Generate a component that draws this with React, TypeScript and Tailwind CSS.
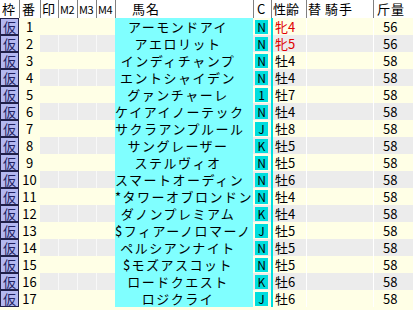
const horses = [
  { no: 1, name: "アーモンドアイ", c: "N", sex: "牝4", kg: 56 },
  { no: 2, name: "アエロリット", c: "N", sex: "牝5", kg: 56 },
  { no: 3, name: "インディチャンプ", c: "N", sex: "牡4", kg: 58 },
  { no: 4, name: "エントシャイデン", c: "N", sex: "牡4", kg: 58 },
  { no: 5, name: "グァンチャーレ", c: "1", sex: "牡7", kg: 58 },
  { no: 6, name: "ケイアイノーテック", c: "N", sex: "牡4", kg: 58 },
  { no: 7, name: "サクラアンプルール", c: "J", sex: "牡8", kg: 58 },
  { no: 8, name: "サングレーザー", c: "K", sex: "牡5", kg: 58 },
  { no: 9, name: "ステルヴィオ", c: "N", sex: "牡5", kg: 58 },
  { no: 10, name: "スマートオーディン", c: "N", sex: "牡6", kg: 58 },
  { no: 11, name: "*タワーオブロンドン", c: "N", sex: "牡4", kg: 58 },
  { no: 12, name: "ダノンプレミアム", c: "K", sex: "牡4", kg: 58 },
  { no: 13, name: "$フィアーノロマーノ", c: "J", sex: "牡5", kg: 58 },
  { no: 14, name: "ペルシアンナイト", c: "N", sex: "牡5", kg: 58 },
  { no: 15, name: "$モズアスコット", c: "N", sex: "牡5", kg: 58 },
  { no: 16, name: "ロードクエスト", c: "K", sex: "牡6", kg: 58 },
  { no: 17, name: "ロジクライ", c: "J", sex: "牡6", kg: 58 },
];

const cols = "grid grid-cols-[19px_21px_18px_19px_19px_19px_138px_18px_35px_67px_40px]";

function App() {
  return (
    <div
      className="w-[413px] h-[310px] overflow-hidden bg-[#ffffe6] text-[13px] text-black"
      style={{ fontFamily: '"MS UI Gothic", "Noto Sans CJK JP", sans-serif' }}
    >
      {/* header */}
      <div className={`${cols} h-[18px] bg-white leading-[18px]`}>
        <div className="pl-[2px]">枠</div>
        <div className="border-l border-[#808080] pl-[2px]">番</div>
        <div className="border-l border-[#808080] pl-[1px]">印</div>
        <div className="border-l border-[#808080] pl-[1px] text-[11px] tracking-[-0.5px]">M2</div>
        <div className="border-l border-[#808080] pl-[1px] text-[11px] tracking-[-0.5px]">M3</div>
        <div className="border-l border-[#808080] pl-[1px] text-[11px] tracking-[-0.5px]">M4</div>
        <div className="border-l border-[#808080] pl-[16px] tracking-[1px]">馬名</div>
        <div className="border-l border-[#808080] pl-[3px]">C</div>
        <div className="border-l border-[#808080] pl-[1px]">性齢</div>
        <div className="border-l border-[#808080] pl-[1px] flex gap-[4px]">
          <span>替</span>
          <span className="tracking-[1px]">騎手</span>
        </div>
        <div className="border-l border-[#808080] pl-[3px] tracking-[1px]">斤量</div>
      </div>

      {horses.map((h, i) => {
        const odd = i % 2 === 0;
        const bg = odd ? "bg-[#ffffe6]" : "bg-[#ececec]";
        const mark = odd ? "border-l border-[#ffffe6]" : "border-l border-[#f8f8f8]";
        return (
          <div key={h.no} className={`${cols} h-[17px] leading-[17px]`}>
            <div className="border border-[#20204a] bg-[#b4b8f0] text-[#202060] text-center leading-[15px]">仮</div>
            <div className="bg-[#ffffe6] text-center">{h.no}</div>
            <div className={bg}></div>
            <div className={`${bg} ${mark}`}></div>
            <div className={`${bg} ${mark}`}></div>
            <div className={`${bg} ${mark}`}></div>
            <div className="bg-[#80ffff] text-center pr-[12px] tracking-[1.5px] whitespace-nowrap">{h.name}</div>
            <div className={`${bg} flex items-center pl-[2px]`}>
              <span className="w-[13px] h-[14px] bg-[#00dede] text-[12px] leading-[14px] text-center">{h.c}</span>
            </div>
            <div className={`${bg} border-l-2 border-[#00dede] pl-[2px] ${h.sex.startsWith("牝") ? "text-[#e00000]" : ""}`}>
              {h.sex}
            </div>
            <div className={`${bg} border-l border-[#ffffff]`}></div>
            <div className={`${bg} border-l border-[#ffffff] pl-[9px]`}>{h.kg}</div>
          </div>
        );
      })}
    </div>
  );
}

export default App;
